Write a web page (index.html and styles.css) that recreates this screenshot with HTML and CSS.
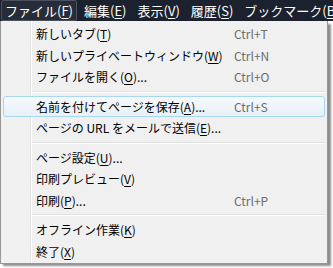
FILE: index.html
```html
<!DOCTYPE html>
<html lang="ja">
<head>
<meta charset="utf-8">
<link rel="stylesheet" href="styles.css">
</head>
<body>
<div class="menubar">
  <span class="mb-item active">ファイル(<u>F</u>)</span>
  <span class="mb-item">編集(<u>E</u>)</span>
  <span class="mb-item">表示(<u>V</u>)</span>
  <span class="mb-item">履歴(<u>S</u>)</span>
  <span class="mb-item">ブックマーク(<u>B</u>)</span>
</div>
<div class="menu-wrap">
  <div class="menu">
    <div class="item"><span class="label">新しいタブ(<u>T</u>)</span><span class="key">Ctrl+T</span></div>
    <div class="item"><span class="label">新しいプライベートウィンドウ(<u>W</u>)</span><span class="key">Ctrl+N</span></div>
    <div class="item"><span class="label">ファイルを開く(<u>O</u>)...</span><span class="key">Ctrl+O</span></div>
    <div class="sep"></div>
    <div class="item hover"><span class="label">名前を付けてページを保存(<u>A</u>)...</span><span class="key">Ctrl+S</span></div>
    <div class="item"><span class="label">ページの URL をメールで送信(<u>E</u>)...</span><span class="key"></span></div>
    <div class="sep"></div>
    <div class="item"><span class="label">ページ設定(<u>U</u>)...</span><span class="key"></span></div>
    <div class="item"><span class="label">印刷プレビュー(<u>V</u>)</span><span class="key"></span></div>
    <div class="item"><span class="label">印刷(<u>P</u>)...</span><span class="key">Ctrl+P</span></div>
    <div class="sep"></div>
    <div class="item"><span class="label">オフライン作業(<u>K</u>)</span><span class="key"></span></div>
    <div class="item"><span class="label">終了(<u>X</u>)</span><span class="key"></span></div>
  </div>
</div>
</body>
</html>
```
FILE: styles.css
```css
html, body {
  margin: 0;
  padding: 0;
  width: 333px;
  height: 268px;
  overflow: hidden;
  background: #ffffff;
  font-family: "Noto Sans CJK JP", "Noto Sans", sans-serif;
}
u { text-decoration: underline; text-underline-offset: 2px; }
.menubar {
  height: 21px;
  background: #1b222d;
  display: flex;
  align-items: center;
  padding-left: 1px;
  color: #ffffff;
  font-size: 13px;
  white-space: nowrap;
  overflow: hidden;
}
.mb-item {
  flex: none;
  height: 19px;
  line-height: 19px;
  padding: 0 3px;
  margin-right: 3px;
  border: 1px solid transparent;
  border-radius: 2px;
}
.mb-item.active {
  border-color: #4a5261;
  background: #262d38;
}
.menu-wrap {
  width: 328px;
  height: 242px;
  box-shadow: 3px 3px 2px rgba(0,0,0,0.45);
}
.menu {
  height: 240px;
  border: 1px solid #979797;
  border-top: none;
  background: #f0f0f0 linear-gradient(to right, #f1f1f1 0, #f1f1f1 29px, #e2e3e3 29px, #e2e3e3 30px, #ffffff 30px, #ffffff 31px, #f0f0f0 31px);
  padding: 2px 2px 0 2px;
  font-size: 12px;
  color: #000;
}
.item {
  height: 21.5px;
  display: flex;
  align-items: center;
  padding-left: 32px;
  border: 1px solid transparent;
  border-radius: 3px;
  box-sizing: border-box;
}
.item.hover {
  border-color: #a8d8f0;
  background: linear-gradient(#f5f9fc, #e8f1f8);
}
.label { width: 198px; white-space: nowrap; }
.key { color: #6d6d6d; }
.sep {
  height: 1px;
  margin: 3px 0 3px 29px;
  background: #e0e0e0;
  border-bottom: 1px solid #ffffff;
}
```
